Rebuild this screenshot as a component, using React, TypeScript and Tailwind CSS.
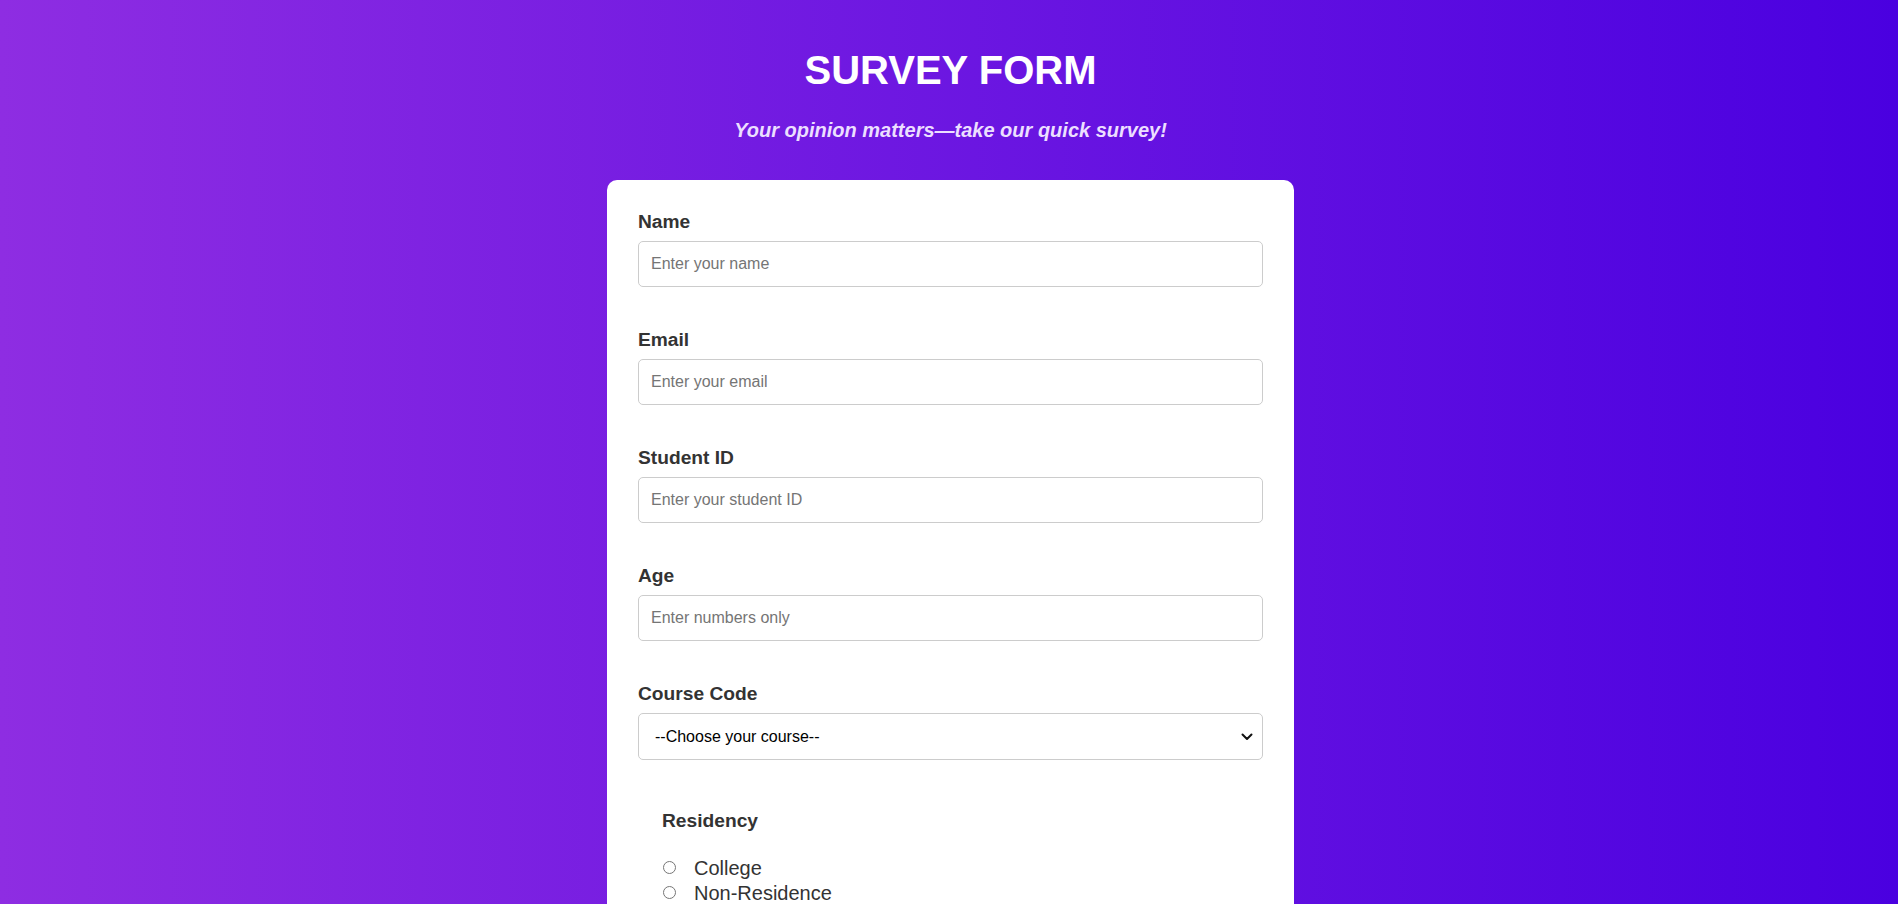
import React from "react";

const fields = [
  { id: "name", label: "Name", type: "text", placeholder: "Enter your name" },
  { id: "email", label: "Email", type: "email", placeholder: "Enter your email" },
  { id: "student-id", label: "Student ID", type: "text", placeholder: "Enter your student ID" },
  { id: "age", label: "Age", type: "number", placeholder: "Enter numbers only" },
];

const Field = ({ id, label, type, placeholder }: { id: string; label: string; type: string; placeholder: string }) => {
  return (
    <div className="mb-[42px]">
      <label htmlFor={id} className="block mb-[8px] text-[19.2px] leading-[22px] font-bold text-[#333]">
        {label}
      </label>
      <input
        id={id}
        type={type}
        placeholder={placeholder}
        className="block w-full h-[46px] px-3 text-[16px] text-[#333] bg-white border border-[#ccc] rounded-[5px] placeholder:text-[#757575] outline-none"
      />
    </div>
  );
};

const Radio = ({ name, label }: { name: string; label: string }) => {
  return (
    <label className="flex items-center h-[25px] text-[20px] text-[#333]">
      <input type="radio" name={name} className="m-0 ml-[1px] mr-[18px] w-[13px] h-[13px]" />
      {label}
    </label>
  );
};

export default function App() {
  return (
    <div
      className="h-screen overflow-hidden pl-[3px] bg-[linear-gradient(to_right,#8e2de2,#4a00e0)] text-[#333]"
      style={{ fontFamily: '"Liberation Sans", Arial, sans-serif' }}
    >
      <header className="pt-[47px] text-center">
        <h1 className="text-[40px] leading-[46px] font-bold text-white">SURVEY FORM</h1>
        <p className="mt-[26px] text-[20px] leading-[23px] font-bold italic text-[#ecdfff]">
          Your opinion matters—take our quick survey!
        </p>
      </header>

      <form className="mt-[38px] mx-auto w-[687px] bg-white rounded-[10px] px-[31px] pt-[31px] pb-8">
        {fields.map((f) => (
          <Field key={f.id} {...f} />
        ))}

        <div className="mb-[41px]">
          <label htmlFor="course" className="block mb-[8px] text-[19.2px] leading-[22px] font-bold text-[#333]">
            Course Code
          </label>
          <div className="relative">
            <select
              id="course"
              defaultValue=""
              className="block w-full h-[47px] pl-[16px] pr-10 text-[16px] text-black bg-white border border-[#ccc] rounded-[5px] outline-none appearance-none"
            >
              <option value="">--Choose your course--</option>
              <option value="cs101">CS101</option>
              <option value="cs102">CS102</option>
            </select>
            <svg
              className="absolute right-[10px] top-1/2 -translate-y-1/2 pointer-events-none"
              width="12"
              height="8"
              viewBox="0 0 12 8"
              fill="none"
            >
              <path d="M1.5 1.5 L6 6 L10.5 1.5" stroke="#111" strokeWidth="2" strokeLinecap="round" strokeLinejoin="round" />
            </svg>
          </div>
        </div>

        <div className="pl-[24px] pt-[9px]">
          <p className="text-[19.2px] leading-[22px] font-bold text-[#333]">Residency</p>
          <div className="mt-[23px] flex flex-col">
            <Radio name="residency" label="College" />
            <Radio name="residency" label="Non-Residence" />
          </div>
        </div>

        <div className="mt-10">
          <p className="mb-[8px] text-[19.2px] leading-[22px] font-bold text-[#333]">Comments</p>
          <textarea className="block w-full h-[120px] p-3 border border-[#ccc] rounded-[5px]" />
        </div>
      </form>
    </div>
  );
}
